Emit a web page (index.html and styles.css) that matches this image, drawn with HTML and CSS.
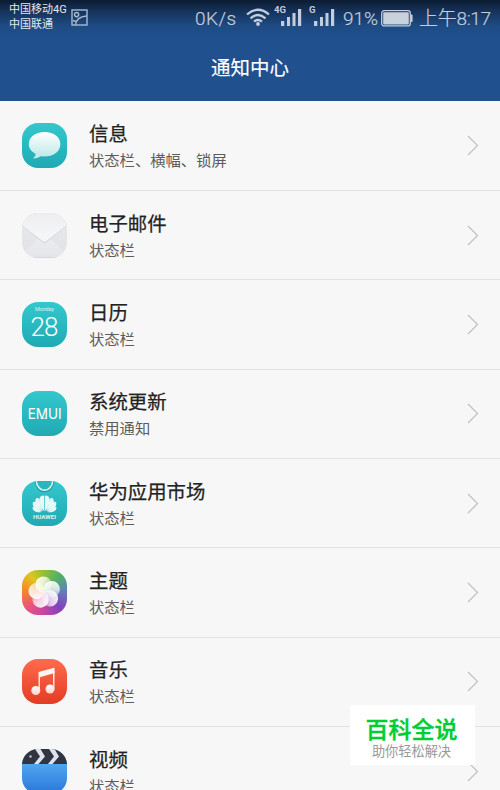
FILE: index.html
```html
<!DOCTYPE html>
<html lang="zh-CN">
<head>
  <meta charset="UTF-8" />
  <meta name="viewport" content="width=device-width, initial-scale=1.0"/>
  <title>通知中心</title>
  <link rel="stylesheet" href="styles.css">
</head>
<body>
  <header>
    <div class="status">
      <div class="carriers">
        <div>中国移动4G</div>
        <div>中国联通</div>
      </div>
      <svg class="shot" width="17" height="17" viewBox="0 0 17 17" fill="none" stroke="#a9b9cf" stroke-width="1.4">
        <rect x="1" y="1" width="15" height="15"/>
        <circle cx="5.6" cy="5.6" r="2.1"/>
        <path d="M4.5 16C5 11 8.500 7.500 15.500 7M2 11.500l3 1"/>
      </svg>
      <span class="speed">0K/s</span>
      <svg class="wifi" width="24" height="18" viewBox="0 0 24 18" fill="none" stroke="#c3cddb" stroke-width="2.300">
        <path d="M1 6.500Q12-3 23 6.500M4.500 10.300Q12 3.700 19.500 10.300M8 13.600Q12 10.300 16 13.600"/>
        <circle cx="12" cy="16" r="1.900" fill="#c3cddb" stroke="none"/>
      </svg>
      <div class="signal first">
        <span>4G</span>
        <svg width="21" height="17" viewBox="0 0 21 17" fill="#c3cddb"><path d="M0 12h3.300v5H0zM6 8h3v9H6zM11.500 4h3v13h-3zM17 0h3.200v17H17z"/></svg>
      </div>
      <div class="signal">
        <span>G</span>
        <svg width="21" height="17" viewBox="0 0 21 17" fill="#c3cddb"><path d="M0 12h3.300v5H0zM6 8h3v9H6zM11.500 4h3v13h-3zM17 0h3.200v17H17z"/></svg>
      </div>
      <span class="percent">91%</span>
      <svg class="battery" width="32" height="17" viewBox="0 0 32 17">
        <rect x=".7" y=".7" width="28.600" height="15.200" rx="2.500" fill="none" stroke="#c3cddb" stroke-width="1.300"/>
        <rect x="2.200" y="2.200" width="25.600" height="12.200" rx=".8" fill="#c9d1dc"/>
        <path d="M29.500 4.500h1.100q1 0 1 1v5.600q0 1-1 1h-1.100z" fill="#c3cddb"/>
      </svg>
      <span class="time">上午8:17</span>
    </div>
    <h1>通知中心</h1>
  </header>

  <svg class="defs" width="0" height="0">
    <defs>
      <linearGradient id="teal" x2="0" y2="1"><stop stop-color="#33c8cd"/><stop offset="1" stop-color="#20aab3"/></linearGradient>
      <linearGradient id="bubble" x2="0" y2="1"><stop stop-color="#fff"/><stop offset="1" stop-color="#b9e8e6"/></linearGradient>
      <linearGradient id="mail" x2="0" y2="1"><stop stop-color="#ececee"/><stop offset="1" stop-color="#dfe0e4"/></linearGradient>
      <linearGradient id="flap" x2="0" y2="1"><stop stop-color="#ededef"/><stop offset="1" stop-color="#f7f8fa"/></linearGradient>
      <linearGradient id="fold" x2="0" y2="1"><stop stop-color="#ececef"/><stop offset="1" stop-color="#e4e5ea"/></linearGradient>
      <linearGradient id="red" x2="0" y2="1"><stop stop-color="#ff6b4d"/><stop offset="1" stop-color="#e23c24"/></linearGradient>
      <linearGradient id="note" x2="0" y2="1"><stop stop-color="#fff"/><stop offset="1" stop-color="#ffd0c8"/></linearGradient>
      <linearGradient id="blue" x2="0" y2="1"><stop stop-color="#62bdf5"/><stop offset="1" stop-color="#2a76dc"/></linearGradient>
      <linearGradient id="petal" x1="0" y1=".3" x2="1" y2=".7"><stop stop-color="#fff" stop-opacity=".92"/><stop offset=".5" stop-color="#fff" stop-opacity=".75"/><stop offset="1" stop-color="#fff" stop-opacity=".25"/></linearGradient>
      <clipPath id="tile"><rect width="45" height="45" rx="16"/></clipPath>
    </defs>
  </svg>

  <ul class="list">
    <li>
      <svg class="icon" viewBox="0 0 45 45">
        <rect width="45" height="45" rx="16" fill="url(#teal)"/>
        <path d="M22.500 10C13.500 10 7.500 15 7.500 22C7.500 26 10 29.500 14.200 31.600Q14 34 11 36.300Q16 36.500 19.500 34Q21 34.200 22.500 34.200C32 34.200 38.500 29 38.500 22S32 10 22.500 10z" fill="#15939b" opacity=".35"/>
        <path d="M22.500 9C13.200 9 6.800 14 6.800 21.300C6.800 25.500 9.500 28.800 13.700 31Q13.500 33.500 11 35.500Q15.500 35.800 18.800 33.200Q20.500 33.600 22.500 33.600C32 33.600 38.400 28.500 38.400 21.300S32 9 22.500 9z" fill="url(#bubble)"/>
      </svg>
      <div class="text"><h2>信息</h2><p>状态栏、横幅、锁屏</p></div>
      <svg class="arrow" viewBox="0 0 12 21"><path d="M1 1l9.500 9.500L1 20"/></svg>
    </li>
    <li>
      <svg class="icon" viewBox="0 0 45 45">
        <g clip-path="url(#tile)">
          <rect width="45" height="45" fill="url(#mail)"/>
          <path d="M0 45V40L17 26h11l17 14v5z" fill="url(#fold)"/>
          <path d="M0 13L20.500 29.200q2 1.600 4 0L45 13V0H0z" fill="#d3d5da"/>
          <path d="M0 12.300L20.500 28q2 1.600 4 0L45 12.300V0H0z" fill="url(#flap)"/>
          <path d="M0 44.700h45" stroke="#cccdd2" stroke-width=".7"/>
        </g>
      </svg>
      <div class="text"><h2>电子邮件</h2><p>状态栏</p></div>
      <svg class="arrow" viewBox="0 0 12 21"><path d="M1 1l9.500 9.500L1 20"/></svg>
    </li>
    <li>
      <svg class="icon" viewBox="0 0 45 45">
        <rect width="45" height="45" rx="16" fill="url(#teal)"/>
        <text class="weekday" x="22.500" y="9.300" textLength="19">Monday</text>
        <text class="day" x="22.500" y="33.500" textLength="28">28</text>
      </svg>
      <div class="text"><h2>日历</h2><p>状态栏</p></div>
      <svg class="arrow" viewBox="0 0 12 21"><path d="M1 1l9.500 9.500L1 20"/></svg>
    </li>
    <li>
      <svg class="icon" viewBox="0 0 45 45">
        <rect width="45" height="45" rx="16" fill="url(#teal)"/>
        <text class="emui" x="22.700" y="27.700" textLength="34" lengthAdjust="spacingAndGlyphs">EMUI</text>
        <path d="M18.500 27.300h5.500" stroke="#fff" stroke-width=".9" opacity=".8"/>
      </svg>
      <div class="text"><h2>系统更新</h2><p>禁用通知</p></div>
      <svg class="arrow" viewBox="0 0 12 21"><path d="M1 1l9.500 9.500L1 20"/></svg>
    </li>
    <li>
      <svg class="icon" viewBox="0 0 45 45">
        <g clip-path="url(#tile)">
          <rect width="45" height="45" fill="url(#teal)"/>
          <path d="M14 0a8.500 9.800 0 0 0 17 0" fill="none" stroke="#188f97" stroke-width="2.400"/>
          <path d="M14.200-1a8.300 10.200 0 0 0 16.600 0" fill="#29b6bc" stroke="#d8f4f3" stroke-width="1.600"/>
        </g>
        <!-- flower, right half mirrors the left one -->
        <g id="half" fill="#e6f8f7">
          <path d="M22.200 30.300C17.300 25 15.200 17 19.800 14.800q1.800-.8 2.400.3z"/>
          <path d="M21.200 30.300C14.500 26.500 11.500 21 14.200 17.300Q17 16 17.600 19.500Q18.200 25.500 21.200 30.300z"/>
          <path d="M20.200 30.500C13 29.500 9.600 25 11 21Q13.400 20 15 23Q16.600 27 20.200 30.500z"/>
          <path d="M19.500 31C14 32 10.300 29.800 10.500 26.200Q13 25.600 14.600 28Q16.700 30.200 19.500 31z"/>
        </g>
        <use href="#half" transform="matrix(-1 0 0 1 45 0)"/>
        <text class="brand" x="22.500" y="37.600" textLength="23" lengthAdjust="spacingAndGlyphs">HUAWEI</text>
      </svg>
      <div class="text"><h2>华为应用市场</h2><p>状态栏</p></div>
      <svg class="arrow" viewBox="0 0 12 21"><path d="M1 1l9.500 9.500L1 20"/></svg>
    </li>
    <li>
      <div class="icon theme">
        <svg viewBox="0 0 45 45">
          <g fill="url(#petal)">
            <circle id="p" cx="21.500" cy="14.600" r="8.200"/>
            <use href="#p" transform="rotate(72 22.500 22.500)"/>
            <use href="#p" transform="rotate(144 22.500 22.500)"/>
            <use href="#p" transform="rotate(216 22.500 22.500)"/>
            <use href="#p" transform="rotate(288 22.500 22.500)"/>
          </g>
        </svg>
      </div>
      <div class="text"><h2>主题</h2><p>状态栏</p></div>
      <svg class="arrow" viewBox="0 0 12 21"><path d="M1 1l9.500 9.500L1 20"/></svg>
    </li>
    <li>
      <svg class="icon" viewBox="0 0 45 45">
        <rect width="45" height="45" rx="16" fill="url(#red)"/>
        <g fill="url(#note)">
          <path d="M16.500 13L32.500 8.800V14L18 18.200V31.500h-1.500z"/>
          <path d="M31 12h1.500v18H31z"/>
          <circle cx="13.800" cy="31.500" r="4.500"/>
          <circle cx="28" cy="30" r="4.500"/>
        </g>
      </svg>
      <div class="text"><h2>音乐</h2><p>状态栏</p></div>
      <svg class="arrow" viewBox="0 0 12 21"><path d="M1 1l9.500 9.500L1 20"/></svg>
    </li>
    <li>
      <svg class="icon" viewBox="0 0 45 45">
        <g clip-path="url(#tile)">
          <rect width="45" height="45" fill="url(#blue)"/>
          <rect width="45" height="15" fill="#32343f"/>
          <path d="M13 0h5.500l4.500 7.500-6.500 7.500H12l6-7.500zM27 0h5.500l4.500 7.500-6.500 7.500H26l6-7.500z" fill="#dce5ef"/>
          <circle cx="8.500" cy="7.500" r="1.300" fill="#b9bdc7"/>
        </g>
      </svg>
      <div class="text"><h2>视频</h2><p>状态栏</p></div>
      <svg class="arrow" viewBox="0 0 12 21"><path d="M1 1l9.500 9.500L1 20"/></svg>
    </li>
  </ul>

  <div class="badge">
    <strong>百科全说</strong>
    <span>助你轻松解决</span>
  </div>
</body>
</html>
```

FILE: styles.css
```css
* {
  box-sizing: border-box;
}
body {
  font-family: Roboto, 'Noto Sans CJK SC', sans-serif;
  margin: 0;
  height: 790px;
  overflow: hidden;
  position: relative;
  background: #f7f7f7;
}
header {
  height: 101px;
  background: linear-gradient(#0c1c31 0, #16345d 12px, #1e4b84 26px, #20508d 38px);
  color: white;
}
.status {
  display: flex;
  align-items: flex-start;
  height: 36px;
  color: #c3cddb;
  white-space: nowrap;
}
.carriers {
  width: 62px;
  margin-left: 9px;
  font-size: 11px;
  line-height: 15px;
  padding-top: 2px;
  color: #e2e7ee;
}
.shot {
  margin-top: 9px;
}
.speed, .percent, .time {
  font-size: 19px;
  line-height: 22px;
  padding-top: 8px;
  font-weight: 300;
  -webkit-text-stroke: 0.2px;
}
.speed {
  width: 51px;
  margin-left: 107px;
  letter-spacing: 0.5px;
}
.wifi {
  margin-top: 8px;
}
.signal {
  display: flex;
  align-items: flex-start;
  width: 34px;
}
.signal.first {
  width: 35px;
  margin-left: 4px;
}
.signal span {
  width: 5px;
  font-size: 9.5px;
  line-height: 10px;
  font-weight: bold;
  margin-top: 5px;
}
.signal.first span {
  width: 7px;
}
.signal svg {
  flex: none;
  margin-top: 9px;
}
.percent {
  width: 38px;
}
.battery {
  margin-top: 10px;
}
.time {
  margin-left: 6px;
  letter-spacing: -0.3px;
}
h1 {
  margin: 0;
  padding-top: 19px;
  font-size: 19.5px;
  line-height: 28px;
  font-weight: 400;
  text-align: center;
  -webkit-text-stroke: 0.15px;
}
.defs {
  display: block;
}
.list {
  list-style: none;
  margin: 0;
  padding: 0.6px 0 0;
}
.list li {
  display: flex;
  align-items: center;
  height: 89.35px;
  padding: 0 21px 0 22px;
  border-bottom: 1px solid #e3e3e3;
}
.icon {
  width: 45px;
  height: 45px;
  flex: none;
}
.text {
  flex: 1;
  margin-left: 22px;
  padding-top: 3px;
}
h2 {
  margin: 0;
  font-size: 19.4px;
  line-height: 28px;
  font-weight: 400;
  color: #222;
  -webkit-text-stroke: 0.25px;
}
.text p {
  margin: 0;
  font-size: 15.3px;
  line-height: 24px;
  color: #5c5c5c;
}
.arrow {
  width: 12px;
  height: 21px;
  fill: none;
  stroke: #c2c2c2;
  stroke-width: 1.3;
}
.icon text {
  fill: white;
  text-anchor: middle;
}
.weekday {
  font-size: 5.5px;
  opacity: 0.8;
}
.day {
  font-size: 26px;
  font-weight: 300;
}
.emui {
  font-family: Inter, sans-serif;
  font-size: 14px;
}
.brand {
  font-size: 4.8px;
  font-weight: bold;
  opacity: 0.85;
}
.theme {
  border-radius: 16px;
  background: conic-gradient(from 0deg, #8ebf38, #4fae6a 45deg, #6380b8 85deg, #8242bd 135deg, #c545a6 180deg, #e8527f 225deg, #f5862b 275deg, #dfc51f 320deg, #8ebf38);
}
.theme svg {
  display: block;
}
.badge {
  position: absolute;
  left: 350px;
  top: 705px;
  width: 125px;
  height: 60px;
  padding: 11px 2px 0 0;
  background: white;
  text-align: center;
}
.badge strong {
  display: block;
  font-size: 23px;
  line-height: 30px;
  font-weight: 500;
  color: #0c3;
  -webkit-text-stroke: 0.4px;
}
.badge span {
  display: block;
  font-size: 13.2px;
  line-height: 12px;
  color: #999;
}
```
